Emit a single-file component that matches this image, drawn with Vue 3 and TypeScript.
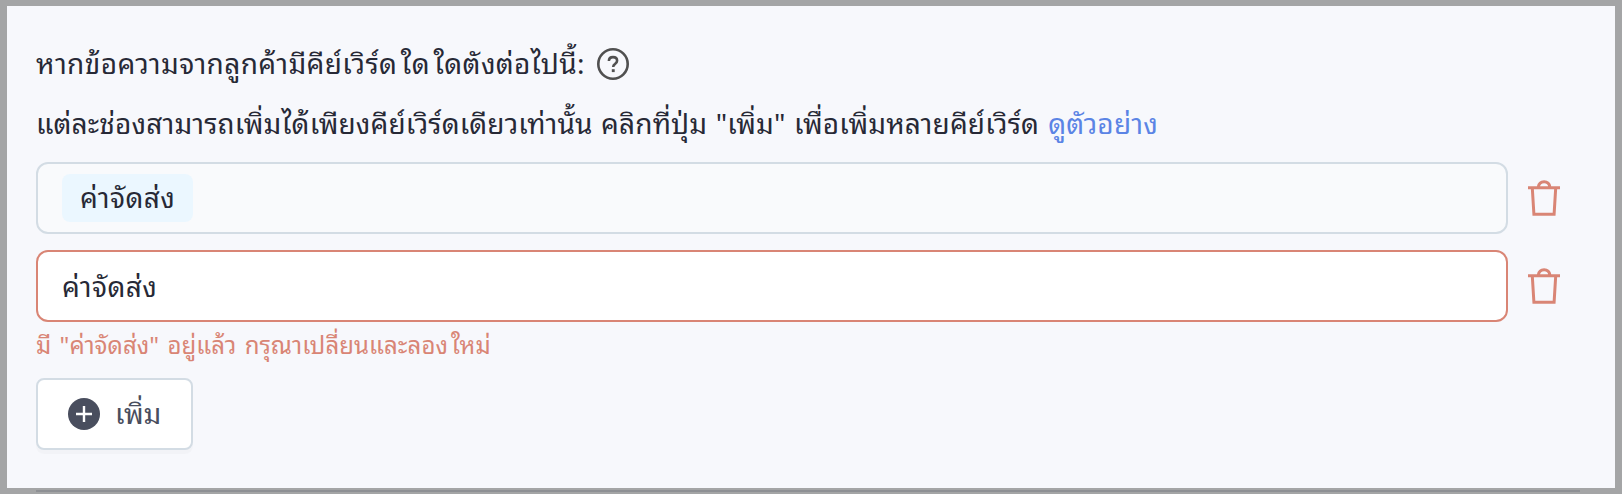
<template>
  <div class="backdrop">
    <section class="panel">
      <div class="heading">
        <span class="heading-text">หากข้อความจากลูกค้ามีคีย์เวิร์ด<span class="vowel">ใ</span>ด<span class="vowel">ใ</span>ดตังต่อไปนี้:</span>
        <svg class="help" viewBox="0 0 32 32" fill="none">
          <circle cx="16" cy="16" r="14.7" stroke="#505050" stroke-width="2.6" />
          <path d="M11.9 13.1c0-2.4 1.6-4 4.1-4s4.1 1.5 4.1 3.7c0 1.7-1 2.4-2.2 3.3-1.2.8-1.7 1.4-1.7 2.9" stroke="#505050" stroke-width="2.6" />
          <path d="M14.8 21.2h2.9v2.9h-2.9z" fill="#505050" />
        </svg>
      </div>

      <p class="hint">
        <span>แต่ละช่องสามารถเพิ่มได้เพียงคีย์เวิร์ดเดียวเท่านั้น คลิกที่ปุ่ม "เพิ่ม" เพื่อเพิ่มหลายคีย์เวิร์ด</span>
        <a class="example-link">ดูตัวอย่าง</a>
      </p>

      <div v-for="(item, index) in keywords" :key="index" class="row">
        <div class="field" :class="{ 'field-error': item.duplicate }">
          <span :class="item.duplicate ? 'value' : 'tag'">{{ item.text }}</span>
        </div>
        <svg class="trash" viewBox="0 0 32 36" fill="none" stroke="#d98575" stroke-width="3" @click="removeKeyword(index)">
          <path d="M0 7.7h32M4.3 8l1.6 26.3h20.2l1.6-26.3M10.3 7c.5-3.2 2.9-5.3 5.8-5.3s5.3 2.1 5.8 5.3" />
        </svg>
      </div>

      <div v-if="duplicate" class="error">มี "{{ duplicate.text }}" อยู่แล้ว กรุณาเปลี่ยนและลอง<span class="vowel">ใ</span>หม่</div>

      <button class="add" type="button" @click="addKeyword">
        <svg class="plus" viewBox="0 0 32 32">
          <circle cx="16" cy="16" r="16" fill="#494e5e" />
          <path d="M16 8v16M8 16h16" stroke="#fff" stroke-width="2.4" />
        </svg>
        <span class="add-label">เพิ่ม</span>
      </button>
    </section>
    <div class="divider"></div>
  </div>
</template>

<script setup lang="ts">
import { ref, computed } from 'vue'

interface Keyword {
  text: string
  duplicate: boolean
}

const keywords = ref<Keyword[]>([
  { text: 'ค่าจัดส่ง', duplicate: false },
  { text: 'ค่าจัดส่ง', duplicate: true }
])

const duplicate = computed(() => keywords.value.find(item => item.duplicate))

function addKeyword() {
  keywords.value.push({ text: '', duplicate: false })
}

function removeKeyword(index: number) {
  keywords.value.splice(index, 1)
}
</script>

<style>
body {
  margin: 0;
  background: #a4a5a6;
}
</style>

<style scoped>
.backdrop {
  box-sizing: border-box;
  height: 494px;
  padding: 6px 7px 0;
  overflow: hidden;
  background: #a4a5a6;
  color: #272936;
  font-family: Thonburi, "Noto Sans Thai Looped", Loma, Garuda, Waree, "Liberation Sans", sans-serif;
  font-size: 28px;
  letter-spacing: 0.4px;
}

.panel {
  box-sizing: border-box;
  height: 482px;
  padding: 34px 29px 0;
  background: #f7f8fc;
}

.heading {
  display: flex;
  align-items: center;
  gap: 12px;
  height: 48px;
  white-space: nowrap;
}

.heading-text {
  padding-bottom: 6px;
}

.vowel {
  margin-left: 3.5px;
}

.help {
  width: 32px;
  height: 32px;
}

.hint {
  height: 48px;
  margin: 12px 0 14px;
  letter-spacing: 0.15px;
  word-spacing: 1px;
  line-height: 43px;
  white-space: nowrap;
}

.example-link {
  color: #5b84e5;
  letter-spacing: 0.2px;
}

.hint .example-link {
  margin-left: 0;
}

.hint span {
  margin-right: 9px;
}

.row {
  display: flex;
  align-items: center;
  gap: 20px;
  margin-bottom: 16px;
}

.field {
  box-sizing: border-box;
  display: flex;
  align-items: center;
  width: 1472px;
  height: 72px;
  padding: 0 24px;
  border: 2px solid #d3dce4;
  border-radius: 12px;
  background: #f9fafc;
  white-space: nowrap;
}

.field-error {
  border-color: #d98575;
  background: #fff;
}

.value {
  padding-bottom: 4px;
}

.tag {
  box-sizing: border-box;
  width: 131px;
  height: 48px;
  padding: 0 18px;
  border-radius: 8px;
  background: #ebf7ff;
  line-height: 44px;
}

.trash {
  width: 32px;
  height: 36px;
}

.error {
  height: 40px;
  margin-top: -12px;
  color: #d98575;
  font-size: 24px;
  letter-spacing: 0.05px;
  word-spacing: 2px;
  line-height: 34px;
  white-space: nowrap;
}

.error .vowel {
  margin-left: 3px;
}

.add {
  box-sizing: border-box;
  display: flex;
  align-items: center;
  gap: 15px;
  width: 157px;
  height: 72px;
  margin-top: 12px;
  padding: 0 30px;
  border: 2px solid #d3dce4;
  border-radius: 8px;
  background: #fff;
  box-shadow: 0 4px 0 rgba(0, 0, 0, 0.02);
  color: #494e5e;
  font: inherit;
  white-space: nowrap;
}

.add-label {
  padding-bottom: 5px;
}

.plus {
  flex-shrink: 0;
  width: 32px;
  height: 32px;
}

.divider {
  height: 2px;
  margin: 2px 35px 0 29px;
  background: #8e9094;
}
</style>
